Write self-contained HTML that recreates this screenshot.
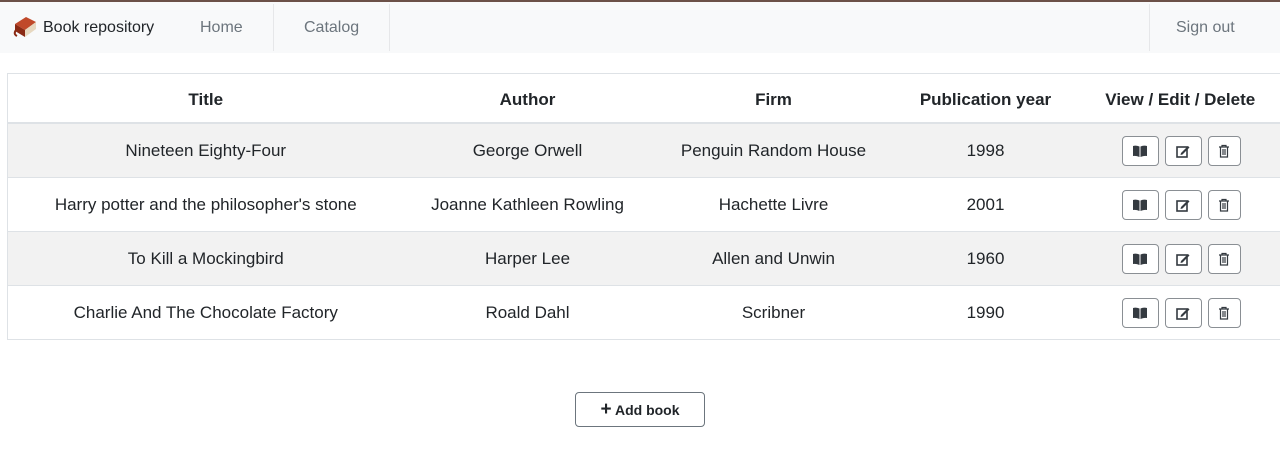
<!DOCTYPE html>
<html><head><style>
body{margin:0;width:1280px;height:459px;overflow:hidden;background:#fff;font-family:"Liberation Sans",sans-serif;color:#212529;position:relative}
.top{position:absolute;left:0;top:0;width:1280px;height:2px;background:#6b5048}
.nav{position:absolute;left:0;top:2px;width:1280px;height:51px;background:#f8f9fa}
.nav span{position:absolute;top:17px;font-size:16px}
.sep{position:absolute;top:2px;width:1px;height:47px;background:#e6e7e9}
table{position:absolute;left:7px;top:73px;width:1278px;border-collapse:collapse;font-size:17px;table-layout:fixed;border:1px solid #dee2e6}
th{height:45px;padding:3px 0 0 0;font-weight:bold;border-bottom:2px solid #dee2e6;text-align:center;font-size:17px}
td{height:53px;text-align:center;border-top:1px solid #dee2e6;padding:0}
tr.s td{background:#f2f2f2}
.b{display:inline-block;vertical-align:middle;height:28px;border:1px solid #8a8f94;border-radius:4px;background:#fff;margin:0 3px;position:relative}
.b svg{position:absolute;left:50%;top:50%;transform:translate(-50%,-50%)}
.add{position:absolute;left:575px;top:392px;width:128px;height:33px;border:1px solid #6c757d;border-radius:4px;font-weight:bold;font-size:14px;text-align:center;line-height:33px;color:#212529}
</style></head><body>
<div class="top"></div>
<div class="nav">
<svg style="position:absolute;left:12px;top:12px" width="26" height="26" viewBox="0 0 26 26"><path d="M3 10 L14 3 L24 8 L13 16 Z" fill="#c0492a"/><path d="M3 10 L13 16 L13 23 L3 17 Z" fill="#8a2a14"/><path d="M13 16 L24 8 L24 15 L13 23 Z" fill="#e7d8c0"/><path d="M4 16 Q1 20 5 22" stroke="#8a2a14" stroke-width="2" fill="none"/></svg>
<span style="left:43px;color:#212529">Book repository</span>
<span style="left:200px;color:#6c757d">Home</span>
<div class="sep" style="left:273px"></div>
<span style="left:304px;color:#6c757d">Catalog</span>
<div class="sep" style="left:389px"></div>
<div class="sep" style="left:1149px"></div>
<span style="left:1176px;color:#6c757d">Sign out</span>
</div>
<table>
<colgroup><col style="width:396px"><col style="width:248px"><col style="width:244px"><col style="width:180px"><col style="width:210px"></colgroup>
<tr><th>Title</th><th>Author</th><th>Firm</th><th>Publication year</th><th>View / Edit / Delete</th></tr>
<tr class="s"><td>Nineteen Eighty-Four</td><td>George Orwell</td><td>Penguin Random House</td><td>1998</td><td class="a"></td></tr>
<tr><td>Harry potter and the philosopher's stone</td><td>Joanne Kathleen Rowling</td><td>Hachette Livre</td><td>2001</td><td class="a"></td></tr>
<tr class="s"><td>To Kill a Mockingbird</td><td>Harper Lee</td><td>Allen and Unwin</td><td>1960</td><td class="a"></td></tr>
<tr><td>Charlie And The Chocolate Factory</td><td>Roald Dahl</td><td>Scribner</td><td>1990</td><td class="a"></td></tr>
</table>
<div class="add"><span style="font-size:19px">+</span> Add book</div>
<script>
var h='<span class="b" style="width:35px"><svg width="14" height="12" viewBox="0 0 14 12"><path d="M0 1 Q3 0 6.5 1.5 V12 Q3 10.5 0 11 Z M14 1 Q11 0 7.5 1.5 V12 Q11 10.5 14 11 Z" fill="#343a40"/></svg></span>'+
'<span class="b" style="width:35px"><svg width="14" height="14" viewBox="0 0 14 14"><rect x="1" y="3" width="10" height="10" fill="none" stroke="#343a40" stroke-width="1.6"/><path d="M5 9 L12 2 L13.5 3.5 L6.5 10.5 L4.5 11 Z" fill="#343a40"/></svg></span>'+
'<span class="b" style="width:31px"><svg width="12" height="14" viewBox="0 0 12 14"><path d="M1 3 H11 M4 3 V1.5 H8 V3 M2.5 3 V13 H9.5 V3 M5 5 V11 M7 5 V11" stroke="#343a40" stroke-width="1.2" fill="none"/></svg></span>';
document.querySelectorAll('td.a').forEach(function(t){t.innerHTML=h;t.style.textAlign='left';t.style.paddingLeft='43px'});
</script>
</body></html>
